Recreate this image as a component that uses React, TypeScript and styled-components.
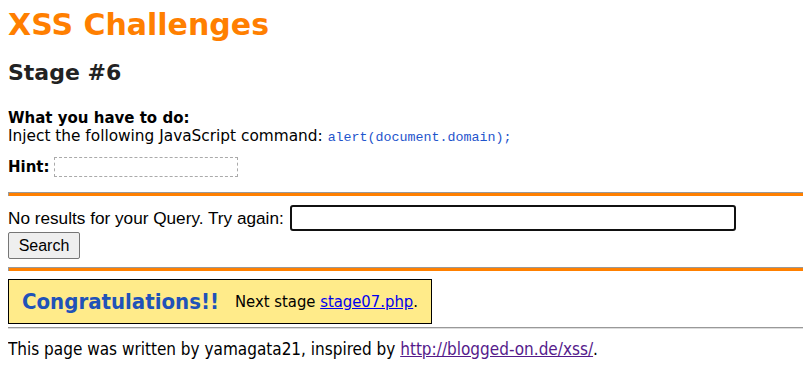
import styled, { createGlobalStyle } from 'styled-components';

const GlobalStyle = createGlobalStyle`
    body {
        margin: 8px;
        background: #ffffff;
        color: #000000;
        font-family: 'DejaVu Sans', Verdana, sans-serif;
        font-size: 15px;
    }
`;

const StyledTitle = styled.h1`
    margin: 0 0 18px;
    font-size: 30px;
    font-weight: bold;
    color: #ff7f00;
    line-height: 34px;
`;

const StyledStage = styled.h2`
    margin: 0 0 23px;
    font-size: 22px;
    font-weight: bold;
    color: #222222;
    line-height: 26px;
`;

const StyledMission = styled.div`
    font-size: 15.35px;
    line-height: 18px;

    b {
        font-size: 15px;
    }
`;

const StyledCode = styled.code`
    font-family: 'Liberation Mono', monospace;
    font-size: 13.33px;
    color: #1f55cc;
`;

const StyledHintRow = styled.div`
    display: flex;
    align-items: center;
    gap: 4px;
    margin-top: 10px;
    font-weight: bold;
    font-size: 15px;
`;

const StyledHintBox = styled.span`
    display: inline-block;
    width: 182px;
    height: 18px;
    border: 1px dashed #aaaaaa;
`;

interface StyledRuleProps {
    $thin?: boolean;
    $top: number;
    $bottom: number;
}

const StyledRule = styled.hr<StyledRuleProps>`
    margin: ${props => `${props.$top}px 0 ${props.$bottom}px`};
    height: ${props => (props.$thin ? '0' : '3px')};
    border: none;
    border-top: 1px solid #999999;
    border-left: ${props => (props.$thin ? 'none' : '1px solid #999999')};
    background: ${props => (props.$thin ? 'transparent' : '#ff8000')};
    border-bottom: ${props => (props.$thin ? '1px solid #dddddd' : 'none')};
`;

const StyledForm = styled.form`
    margin: 0;
    font-family: 'Liberation Sans', Arial, sans-serif;
    font-size: 17.2px;
`;

const StyledQueryRow = styled.div`
    display: flex;
    align-items: center;
    gap: 6px;
`;

const StyledInput = styled.input`
    width: 440px;
    height: 22px;
    box-sizing: content-box;
    border: 2px solid #111111;
    border-radius: 3px;
    padding: 0 1px;
    margin: 0;
    outline: none;
    font-size: 15px;
`;

const StyledButton = styled.button`
    display: block;
    margin-top: 1px;
    width: 72px;
    height: 27px;
    padding: 0;
    font-family: 'Liberation Sans', Arial, sans-serif;
    font-size: 16px;
    color: #000000;
    background: #efefef;
    border: 1px solid #767676;
    border-radius: 2px;
`;

const StyledCongrats = styled.div`
    display: inline-flex;
    align-items: center;
    gap: 16px;
    padding: 0 13px;
    height: 43px;
    background: #ffeb8a;
    border: 1px solid #000000;
    font-family: 'DejaVu Sans Condensed', 'DejaVu Sans', sans-serif;
    font-size: 16.5px;

    strong {
        color: #2152b8;
        font-size: 22px;
    }

    a {
        color: #0000ee;
    }
`;

const StyledFooter = styled.p`
    margin: 10px 0 0;
    font-family: 'DejaVu Sans Condensed', 'DejaVu Sans', sans-serif;
    font-size: 17px;

    a {
        color: #551a8b;
    }
`;

function App() {
    return (
        <>
            <GlobalStyle />
            <StyledTitle>XSS Challenges</StyledTitle>
            <StyledStage>Stage #6</StyledStage>
            <StyledMission>
                <b>What you have to do:</b>
                <br />
                Inject the following JavaScript command: <StyledCode>alert(document.domain);</StyledCode>
            </StyledMission>
            <StyledHintRow>
                Hint: <StyledHintBox />
            </StyledHintRow>
            <StyledRule $top={15} $bottom={9} />
            <StyledForm onSubmit={e => e.preventDefault()}>
                <StyledQueryRow>
                    No results for your Query. Try again:
                    <StyledInput type='text' defaultValue='' />
                </StyledQueryRow>
                <StyledButton type='submit'>Search</StyledButton>
            </StyledForm>
            <StyledRule $top={8} $bottom={8} />
            <StyledCongrats>
                <strong>Congratulations!!</strong>
                <span>
                    Next stage <a href='#'>stage07.php</a>.
                </span>
            </StyledCongrats>
            <StyledRule $thin $top={3} $bottom={0} />
            <StyledFooter>
                This page was written by yamagata21, inspired by <a href='#'>http://blogged-on.de/xss/</a>.
            </StyledFooter>
        </>
    );
}

export default App;
